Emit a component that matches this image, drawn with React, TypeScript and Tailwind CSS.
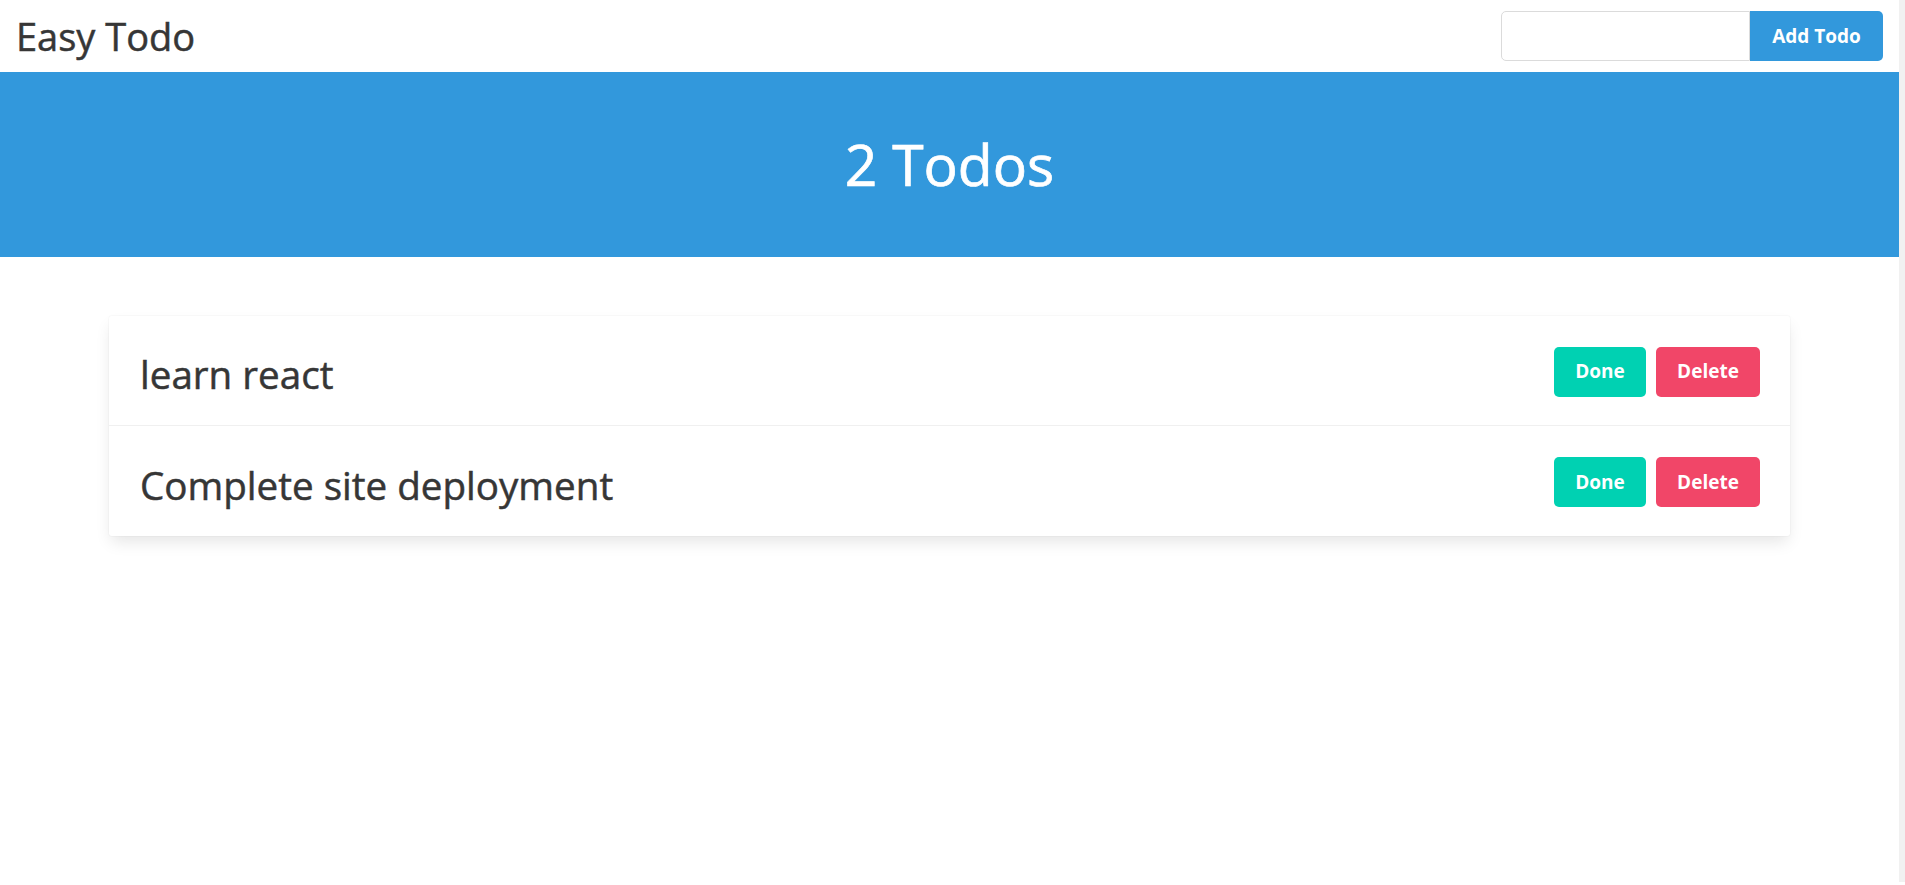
import React from "react";

const font = { fontFamily: '"Open Sans", "Noto Sans", sans-serif' };

function TodoRow({ text, last }: { text: string; last?: boolean }) {
  return (
    <div
      className={`flex h-[110px] items-center justify-between pl-[31px] pr-[30px] ${
        last ? "" : "border-b border-[#f0f0f0]"
      }`}
    >
      <span className="pt-[8px] text-[38.6px] leading-none text-[#363636] [-webkit-text-stroke:0.5px_#363636]">
        {text}
      </span>
      <div className="flex gap-[10px] pt-[2px]">
        <button className="h-[50px] w-[92px] rounded-[5px] bg-[#00d1b2] text-[19px] font-bold text-white">
          Done
        </button>
        <button className="h-[50px] w-[104px] rounded-[5px] bg-[#f14668] text-[19px] font-bold text-white">
          Delete
        </button>
      </div>
    </div>
  );
}

export default function App() {
  return (
    <div className="flex min-h-[885px] w-full bg-white" style={font}>
      <div className="flex-1">
        <nav className="flex h-[72px] items-center justify-between pl-[16px] pr-[16px]">
          <span className="text-[38px] leading-none text-[#363636] [-webkit-text-stroke:0.5px_#363636]">
            Easy Todo
          </span>
          <div className="flex h-[50px]">
            <input
              className="h-[50px] w-[249px] rounded-l-[5px] border border-[#dbdbdb] bg-white px-3 outline-none"
              type="text"
            />
            <button className="h-[50px] w-[133px] rounded-r-[5px] bg-[#3298dc] text-[19px] font-bold text-white">
              Add Todo
            </button>
          </div>
        </nav>
        <header className="flex h-[185px] items-center justify-center bg-[#3298dc]">
          <h1 className="text-[57px] font-normal leading-none text-white [-webkit-text-stroke:0.7px_#ffffff]">
            2 Todos
          </h1>
        </header>
        <section className="px-[109px] pt-[59px]">
          <div className="rounded-[3px] bg-white shadow-[0_8px_16px_-2px_rgba(10,10,10,0.1),0_0_0_1px_rgba(10,10,10,0.02)]">
            <TodoRow text="learn react" />
            <TodoRow text="Complete site deployment" last />
          </div>
        </section>
      </div>
      <div className="h-[882px] w-[6px] bg-[#f1f1f1]" />
    </div>
  );
}
